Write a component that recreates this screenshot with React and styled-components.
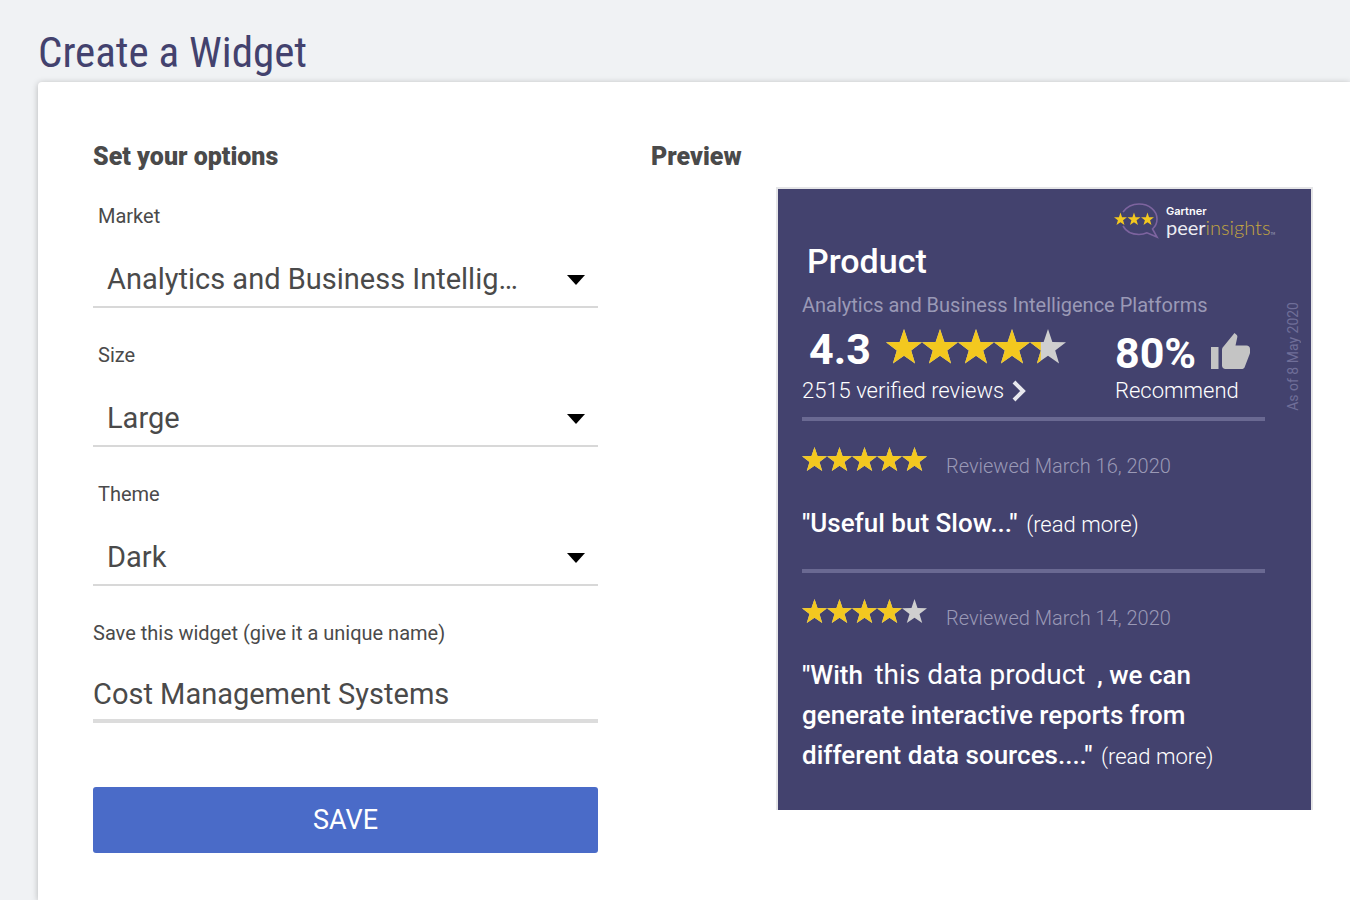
import React, { useState } from "react";
import styled, { createGlobalStyle } from "styled-components";

const GlobalStyle = createGlobalStyle`
  * {
    box-sizing: border-box;
  }
  body {
    margin: 0;
    background: #f0f2f4;
    color: #4a4a4a;
    font-family: Roboto, "Liberation Sans", sans-serif;
  }
`;
const Page = styled.div`
  min-height: 100vh;
  padding: 22px 0 0 38px;
  display: flex;
  flex-direction: column;
`;
const PageTitle = styled.h1`
  margin: 0;
  color: #43426e;
  font-family: "Roboto Condensed", "Liberation Sans Narrow", Roboto, sans-serif;
  font-size: 43px;
  font-weight: 400;
  line-height: 60px;
`;
const Card = styled.main`
  flex: 1;
  padding: 59px 37px 47px 55px;
  display: grid;
  grid-template-columns: minmax(0, 505px) minmax(0, 1fr);
  column-gap: 53px;
  align-items: start;
  background: #fff;
  border-radius: 4px 0 0 0;
  box-shadow: 0 1px 6px rgba(0, 0, 0, 0.25);
`;
const Form = styled.form`
  display: flex;
  flex-direction: column;
`;
const SectionTitle = styled.h2`
  margin: 0;
  font-size: 25px;
  font-weight: 900;
  line-height: 32px;
`;
const Fields = styled.div`
  margin: 31px 0 64px;
  display: flex;
  flex-direction: column;
  gap: 35px;
`;
const Field = styled.div`
  display: flex;
  flex-direction: column;
`;
const Label = styled.label`
  padding-left: ${props => (props.$inset ? "5px" : "0")};
  font-size: 20px;
  line-height: 24px;
`;
const SelectBox = styled.div`
  position: relative;
  padding-top: 24px;
  border-bottom: 2px solid #d8d8d8;
`;
const Select = styled.select`
  appearance: none;
  display: block;
  width: 100%;
  height: 54px;
  padding: 0 80px 0 14px;
  border: 0;
  background: transparent;
  color: inherit;
  font: inherit;
  font-size: 29px;
  text-overflow: ellipsis;
  overflow: hidden;
  white-space: nowrap;
`;
const Arrow = styled.svg`
  position: absolute;
  right: 13px;
  bottom: 21px;
  pointer-events: none;
`;
const Input = styled.input`
  width: 100%;
  height: 54px;
  margin-top: 24px;
  padding: 0;
  border: 0;
  border-bottom: 4px solid #dcdcdc;
  background: transparent;
  color: inherit;
  font: inherit;
  font-size: 29px;
`;
const SaveButton = styled.button`
  height: 66px;
  border: 0;
  border-radius: 3px;
  background: #4a6bc8;
  color: #fff;
  font: inherit;
  font-size: 27px;
`;
const Preview = styled.section`
  display: flex;
  flex-direction: column;
`;
const Widget = styled.article`
  width: 100%;
  max-width: 537px;
  margin-top: 14px;
  padding: 14px 10px 9px 24px;
  align-self: flex-end;
  display: grid;
  grid-template-columns: minmax(0, 1fr) 36px;
  border: 2px solid #e5e5e7;
  border-bottom: 0;
  background: #43426e;
  color: #fff;
`;
const WidgetBody = styled.div`
  display: flex;
  flex-direction: column;
`;
const Logo = styled.div`
  grid-column: 1 / -1;
  height: 38px;
  padding-right: 26px;
  display: flex;
  justify-content: flex-end;
  gap: 7px;
`;
const LogoText = styled.div`
  display: flex;
  flex-direction: column;
  font-family: Inter, sans-serif;
`;
const Brand = styled.span`
  font-size: 11px;
  font-weight: 600;
  line-height: 16px;
`;
const Peer = styled.span`
  color: #ececf2;
  font-family: Lato, sans-serif;
  font-size: 20px;
  line-height: 16px;
`;
const Insights = styled.span`
  color: #c4a640;
  font-weight: 300;
`;
const Trade = styled.small`
  color: #b0b0c4;
  font-size: 3px;
  line-height: 1;
`;
const ProductName = styled.h3`
  margin: 0 0 0 5px;
  font-size: 34px;
  font-weight: 500;
  line-height: 40px;
`;
const Muted = styled.span`
  color: #9a99b6;
  font-size: 20px;
  font-weight: ${props => (props.$light ? 300 : 400)};
  line-height: 24px;
`;
const MarketName = styled(Muted)`
  margin-top: 12px;
`;
const Stats = styled.div`
  margin: 12px 0;
  display: grid;
  grid-template-columns: 313px minmax(0, 1fr);
`;
const Score = styled.div`
  height: 48px;
  padding: ${props => (props.$inset ? "0 0 0 7px" : "4px 0 0")};
  display: flex;
  align-items: flex-start;
  gap: 15px;
  font-size: 43px;
  font-weight: 700;
  line-height: 40px;
`;
const Caption = styled.div`
  display: flex;
  align-items: center;
  font-size: 22px;
  font-weight: 300;
  line-height: 28px;
`;
const ReviewsLink = styled.a`
  display: flex;
  align-items: center;
  gap: 8px;
  color: inherit;
  text-decoration: none;
`;
const Divider = styled.hr`
  width: 100%;
  height: 4px;
  margin: 0;
  border: 0;
  background: #6a6992;
`;
const Review = styled.div`
  padding: 26px 0 24px;
  display: flex;
  flex-direction: column;
  gap: 25px;
`;
const ReviewHead = styled.div`
  display: flex;
  align-items: flex-start;
  gap: 19px;
`;
const ReviewDate = styled(Muted)`
  margin-top: 7px;
`;
const Quote = styled.p`
  margin: 0;
  font-size: 26px;
  font-weight: 500;
  line-height: 40px;
`;
const Plain = styled.span`
  margin: 0 5px;
  font-size: 28px;
  font-weight: 400;
`;
const More = styled.a`
  margin-left: 2px;
  color: inherit;
  font-size: 22px;
  font-weight: 300;
  text-decoration: none;
`;
const AsOf = styled.span`
  justify-self: end;
  align-self: start;
  margin-top: 61px;
  writing-mode: vertical-rl;
  transform: rotate(180deg);
  color: #6f6e98;
  font-size: 14px;
  line-height: 16px;
`;

const STAR = "M12 0 L14.9 8.7 L24 8.9 L16.8 14.4 L19.4 23 L12 17.9 L4.6 23 L7.2 14.4 L0 8.9 L9.1 8.7 Z";

const Stars = ({ value, size }) => (
  <svg
    width={size * 5}
    height={size}
    viewBox="0 0 120 24"
    role="img"
    aria-label={`${value} out of 5 stars`}
  >
    <defs>
      <clipPath id={`fill-${size}-${value}`}>
        <rect width={value * 24} height="24" />
      </clipPath>
    </defs>
    {[0, 24, 48, 72, 96].map(x => (
      <path key={x} d={STAR} fill="#cfcfcf" transform={`translate(${x} 0)`} />
    ))}
    <g clipPath={`url(#fill-${size}-${value})`}>
      {[0, 24, 48, 72, 96].map(x => (
        <path key={x} d={STAR} fill="#f3c81f" transform={`translate(${x} 0)`} />
      ))}
    </g>
  </svg>
);

const Dropdown = ({ id, label, options }) => (
  <Field>
    <Label htmlFor={id} $inset>
      {label}
    </Label>
    <SelectBox>
      <Select id={id}>
        {options.map(option => (
          <option key={option}>{option}</option>
        ))}
      </Select>
      <Arrow width="18" height="10" viewBox="0 0 18 10">
        <path d="M0 0h18L9 10z" fill="#000" />
      </Arrow>
    </SelectBox>
  </Field>
);

const PeerInsightsLogo = () => (
  <Logo>
    <svg width="45" height="36" viewBox="0 0 45 36">
      <path
        d="M9 9C13 3.500 19 1 25 1C35 1 43 7.500 43 16C43 20 41.500 23.500 38.500 26L43 34L33 29.800C30.500 31 28 31.500 25 31.500C18 31.500 12 28.500 9 23"
        fill="none"
        stroke="#7d649f"
        strokeWidth="1.600"
      />
      {[0, 13.5, 27].map(x => (
        <path
          key={x}
          d={STAR}
          fill="#f3c81f"
          transform={`translate(${x} 9.500) scale(0.540)`}
        />
      ))}
    </svg>
    <LogoText>
      <Brand>Gartner</Brand>
      <Peer>
        peer<Insights>insights</Insights>
        <Trade>TM</Trade>
      </Peer>
    </LogoText>
  </Logo>
);

export default () => {
  const [name, setName] = useState("Cost Management Systems");
  return (
    <Page>
      <GlobalStyle />
      <PageTitle>Create a Widget</PageTitle>
      <Card>
        <Form onSubmit={e => e.preventDefault()}>
          <SectionTitle>Set your options</SectionTitle>
          <Fields>
            <Dropdown
              id="market"
              label="Market"
              options={["Analytics and Business Intelligence Platforms"]}
            />
            <Dropdown id="size" label="Size" options={["Large"]} />
            <Dropdown id="theme" label="Theme" options={["Dark"]} />
            <Field>
              <Label htmlFor="name">
                Save this widget (give it a unique name)
              </Label>
              <Input
                id="name"
                value={name}
                onChange={e => setName(e.target.value)}
              />
            </Field>
          </Fields>
          <SaveButton type="submit">SAVE</SaveButton>
        </Form>
        <Preview>
          <SectionTitle>Preview</SectionTitle>
          <Widget>
            <PeerInsightsLogo />
            <WidgetBody>
              <ProductName>Product</ProductName>
              <MarketName>
                Analytics and Business Intelligence Platforms
              </MarketName>
              <Stats>
                <Score $inset>
                  4.3
                  <Stars value={4.3} size={36} />
                </Score>
                <Score>
                  80%
                  <svg width="39" height="36" viewBox="0 0 39 36">
                    <path
                      d="M0 14h7.500v22H0zM11 17c0-1.500.500-2.500 1.500-3.500L23.500 0l2 1.800c.800.800 1 1.500.800 2.500L24.500 12.500H35.500c2 0 3.500 1.500 3.500 3.500v3.500c0 .500-.100 1-.300 1.400l-5 13c-.500 1.300-1.700 2.100-3.200 2.100H14.500c-2 0-3.500-1.500-3.500-3.500z"
                      fill="#c4c4c4"
                    />
                  </svg>
                </Score>
                <Caption>
                  <ReviewsLink href="#reviews">
                    2515 verified reviews
                    <svg width="14" height="22" viewBox="0 0 14 22">
                      <path
                        d="M2 2l9 9-9 9"
                        fill="none"
                        stroke="#e8e8ee"
                        strokeWidth="4"
                      />
                    </svg>
                  </ReviewsLink>
                </Caption>
                <Caption>Recommend</Caption>
              </Stats>
            </WidgetBody>
            <AsOf>As of 8 May 2020</AsOf>
            <WidgetBody id="reviews">
              <Divider />
              <Review>
                <ReviewHead>
                  <Stars value={5} size={25} />
                  <ReviewDate $light>Reviewed March 16, 2020</ReviewDate>
                </ReviewHead>
                <Quote>
                  "Useful but Slow..." <More href="#read">(read more)</More>
                </Quote>
              </Review>
              <Divider />
              <Review>
                <ReviewHead>
                  <Stars value={4} size={25} />
                  <ReviewDate $light>Reviewed March 14, 2020</ReviewDate>
                </ReviewHead>
                <Quote>
                  "With <Plain>this data product</Plain> , we can generate
                  interactive reports from different data sources...."{" "}
                  <More href="#read">(read more)</More>
                </Quote>
              </Review>
            </WidgetBody>
          </Widget>
        </Preview>
      </Card>
    </Page>
  );
};
